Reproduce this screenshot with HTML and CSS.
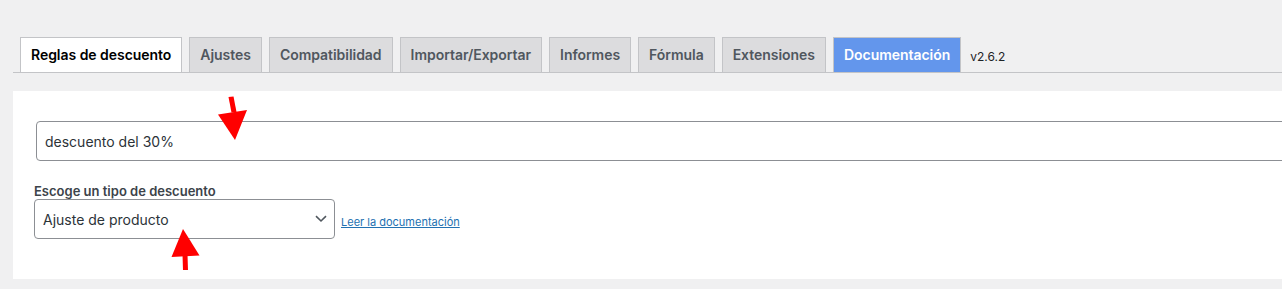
FILE: index.html
```html
<!DOCTYPE html>
<html lang="es">
<head>
    <meta charset="UTF-8">
    <meta name="viewport" content="width=device-width, initial-scale=1.0">
    <title>Reglas de descuento</title>
    <link rel="stylesheet" href="styles.css">
</head>
<body>

    <!-- Tabs -->
    <nav class="nav-tab-wrapper">
        <a class="nav-tab nav-tab-active" href="#">Reglas de descuento</a>
        <a class="nav-tab" href="#">Ajustes</a>
        <a class="nav-tab" href="#">Compatibilidad</a>
        <a class="nav-tab" href="#">Importar/Exportar</a>
        <a class="nav-tab" href="#">Informes</a>
        <a class="nav-tab" href="#">Fórmula</a>
        <a class="nav-tab" href="#">Extensiones</a>
        <a class="nav-tab nav-tab-docs" href="#">Documentación</a>
        <span class="version">v2.6.2</span>
    </nav>

    <!-- Rule panel -->
    <div class="panel">
        <input class="rule-title" type="text" value="descuento del 30%">

        <div class="field">
            <label class="field-label" for="discountType">Escoge un tipo de descuento</label>
            <div class="field-row">
                <div class="select-wrap">
                    <select id="discountType" class="discount-type">
                        <option>Ajuste de producto</option>
                        <option>Ajuste de carrito</option>
                        <option>Descuento por cantidad</option>
                    </select>
                    <svg class="chevron" width="12" height="8" viewBox="0 0 12 8">
                        <path d="M1 1.2 L6 6 L11 1.2" fill="none" stroke="#50575e" stroke-width="1.6"/>
                    </svg>
                </div>
                <a class="doc-link" href="#">Leer la documentación</a>
            </div>
        </div>
    </div>

    <!-- Annotation arrows -->
    <svg class="arrows" width="1282" height="289" viewBox="0 0 1282 289">
        <polygon points="228.5,97 233.5,96.5 236.5,112 231.5,112.5" fill="#ff0000"/>
        <polygon points="218,114.5 247,110 235,140" fill="#ff0000"/>
        <polygon points="183,229 171.5,257 199.5,255.5" fill="#ff0000"/>
        <polygon points="182.5,255 187.5,255 188,270 183,270" fill="#ff0000"/>
    </svg>

</body>
</html>
```

FILE: styles.css
```css
/* General */
html, body {
    margin: 0;
    overflow: hidden;
}

body {
    background-color: #f0f0f1;
    font-family: Inter, "Noto Sans", sans-serif;
    color: #2c3338;
    position: relative;
    min-height: 289px;
}

/* Tabs */
.nav-tab-wrapper {
    display: flex;
    align-items: flex-end;
    margin-left: 13px;
    padding-top: 37px;
    border-bottom: 1px solid #c3c4c7;
}

.nav-tab {
    display: block;
    margin-left: 7px;
    padding: 5px 10px;
    line-height: 24px;
    font-size: 14px;
    font-weight: 600;
    letter-spacing: -0.04px;
    color: #50575e;
    background-color: #dcdcde;
    border: 1px solid #c3c4c7;
    border-bottom: none;
    text-decoration: none;
    white-space: nowrap;
}

.nav-tab-active {
    background-color: #fff;
    color: #000;
}

.nav-tab-docs {
    background-color: #6396ec;
    color: #fff;
}

.version {
    align-self: center;
    margin-left: 9px;
    margin-top: 3px;
    font-size: 12px;
    color: #1d2327;
}

/* Panel */
.panel {
    margin: 18px 0 0 13px;
    padding: 30px 0 40px 21px;
    width: 1400px;
    background-color: #fff;
}

.rule-title {
    display: block;
    box-sizing: border-box;
    width: 1300px;
    height: 40px;
    margin: 0 0 0 2px;
    padding: 0 8px;
    font-family: inherit;
    font-size: 14px;
    color: #2c3338;
    border: 1px solid #8c8f94;
    border-radius: 4px;
    background: #fff;
    outline: none;
}

.field {
    margin-top: 22px;
}

.field-label {
    display: block;
    line-height: 16px;
    font-size: 13px;
    font-weight: 600;
    color: #3c434a;
}

.field-row {
    display: flex;
    align-items: center;
}

.select-wrap {
    position: relative;
    width: 301px;
    height: 40px;
}

.discount-type {
    appearance: none;
    -webkit-appearance: none;
    box-sizing: border-box;
    width: 100%;
    height: 40px;
    margin: 0;
    padding: 0 30px 0 8px;
    font-family: inherit;
    font-size: 14px;
    color: #2c3338;
    background: #fff;
    border: 1px solid #8c8f94;
    border-radius: 4px;
    outline: none;
}

.chevron {
    position: absolute;
    right: 8px;
    top: 16px;
    pointer-events: none;
}

.doc-link {
    margin-left: 6px;
    margin-top: 5px;
    font-size: 11px;
    color: #2271b1;
}

/* Arrows drawn over the form */
.arrows {
    position: absolute;
    left: 0;
    top: 0;
    pointer-events: none;
}
```
